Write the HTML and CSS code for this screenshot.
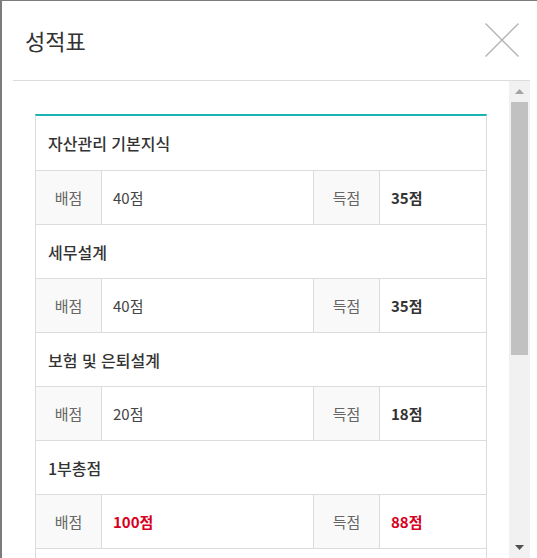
FILE: index.html
```html
<!DOCTYPE html>
<html lang="ko">
<head>
<meta charset="utf-8">
<title>성적표</title>
<link rel="stylesheet" href="styles.css">
</head>
<body>
<div class="modal">
  <div class="modal-head">
    <h1 class="modal-title">성적표</h1>
    <button class="close" type="button" aria-label="닫기">
      <svg width="34" height="34" viewBox="0 0 34 34"><path d="M0.5 0.5 L33.5 33.5 M33.5 0.5 L0.5 33.5" stroke="#b4b4b4" stroke-width="1.4" fill="none"/></svg>
    </button>
  </div>
  <div class="modal-scroll">
    <div class="modal-body">
      <div class="score">
        <div class="subject">자산관리 기본지식</div>
        <div class="row"><div class="lbl">배점</div><div class="val">40점</div><div class="lbl">득점</div><div class="val strong">35점</div></div>
        <div class="subject">세무설계</div>
        <div class="row"><div class="lbl">배점</div><div class="val">40점</div><div class="lbl">득점</div><div class="val strong">35점</div></div>
        <div class="subject">보험 및 은퇴설계</div>
        <div class="row"><div class="lbl">배점</div><div class="val">20점</div><div class="lbl">득점</div><div class="val strong">18점</div></div>
        <div class="subject">1부총점</div>
        <div class="row"><div class="lbl">배점</div><div class="val strong red">100점</div><div class="lbl">득점</div><div class="val strong red">88점</div></div>
        <div class="subject empty"></div>
      </div>
    </div>
    <div class="scrollbar" aria-hidden="true">
      <div class="sb-btn">
        <svg width="9" height="5" viewBox="0 0 9 5"><path d="M0 5 L4.5 0 L9 5 Z" fill="#a3a3a3"/></svg>
      </div>
      <div class="sb-track"><div class="sb-thumb"></div></div>
      <div class="sb-btn">
        <svg width="9" height="5" viewBox="0 0 9 5"><path d="M0 0 L4.5 5 L9 0 Z" fill="#505050"/></svg>
      </div>
    </div>
  </div>
</div>
</body>
</html>
```

FILE: styles.css
```css
* { box-sizing: border-box; }
html, body { margin: 0; padding: 0; height: 100%; overflow: hidden; }
body {
  background: #7c7c7c;
  font-family: "Noto Sans CJK KR", "Noto Sans", sans-serif;
  color: #333;
}
.modal {
  margin: 1px 0 0 2px;
  height: 557px;
  background: #fff;
  padding: 0 7px 0 11px;
  display: flex;
  flex-direction: column;
}
.modal-head {
  height: 80px;
  flex: none;
  border-bottom: 1px solid #dcdcdc;
  display: flex;
  align-items: center;
  justify-content: space-between;
  padding: 0 11px 1px 12px;
}
.modal-title {
  margin: 0;
  font-size: 22px;
  font-weight: 400;
  line-height: 1;
  color: #333;
}
.close {
  border: 0;
  background: none;
  padding: 0;
  width: 34px;
  height: 34px;
  display: block;
  cursor: pointer;
}
.close svg { display: block; }
.modal-scroll {
  flex: 1;
  min-height: 0;
  display: flex;
}
.modal-body {
  flex: 1;
  min-width: 0;
  overflow: hidden;
  padding: 33px 22px 0 22px;
}
.scrollbar {
  width: 21px;
  flex: none;
  background: #f1f1f1;
  display: flex;
  flex-direction: column;
}
.sb-btn {
  height: 21px;
  flex: none;
  display: flex;
  align-items: center;
  justify-content: center;
}
.sb-btn svg { display: block; }
.sb-track {
  flex: 1;
  padding: 0 2px;
}
.sb-thumb {
  height: 253px;
  background: #c1c1c1;
}
.score {
  border-top: 2px solid #1cb3b3;
  border-left: 1px solid #dcdcdc;
  border-right: 1px solid #dcdcdc;
}
.subject {
  height: 54px;
  border-bottom: 1px solid #dcdcdc;
  display: flex;
  align-items: center;
  padding-left: 12px;
  font-size: 16px;
  font-weight: 500;
  color: #333;
  line-height: 1;
}
.subject:first-child { height: 55px; }
.row {
  height: 54px;
  border-bottom: 1px solid #dcdcdc;
  display: grid;
  grid-template-columns: 66px 212px 66px 1fr;
  font-size: 15px;
  line-height: 1;
}
.row > div {
  display: flex;
  align-items: center;
}
.lbl {
  background: #f9f9f9;
  justify-content: center;
  color: #666;
  border-right: 1px solid #dcdcdc;
}
.val {
  padding-left: 11px;
  color: #444;
}
.row > .val:nth-child(2) { border-right: 1px solid #dcdcdc; }
.strong { font-weight: 700; color: #333; }
.red { color: #d7001e; }
```
